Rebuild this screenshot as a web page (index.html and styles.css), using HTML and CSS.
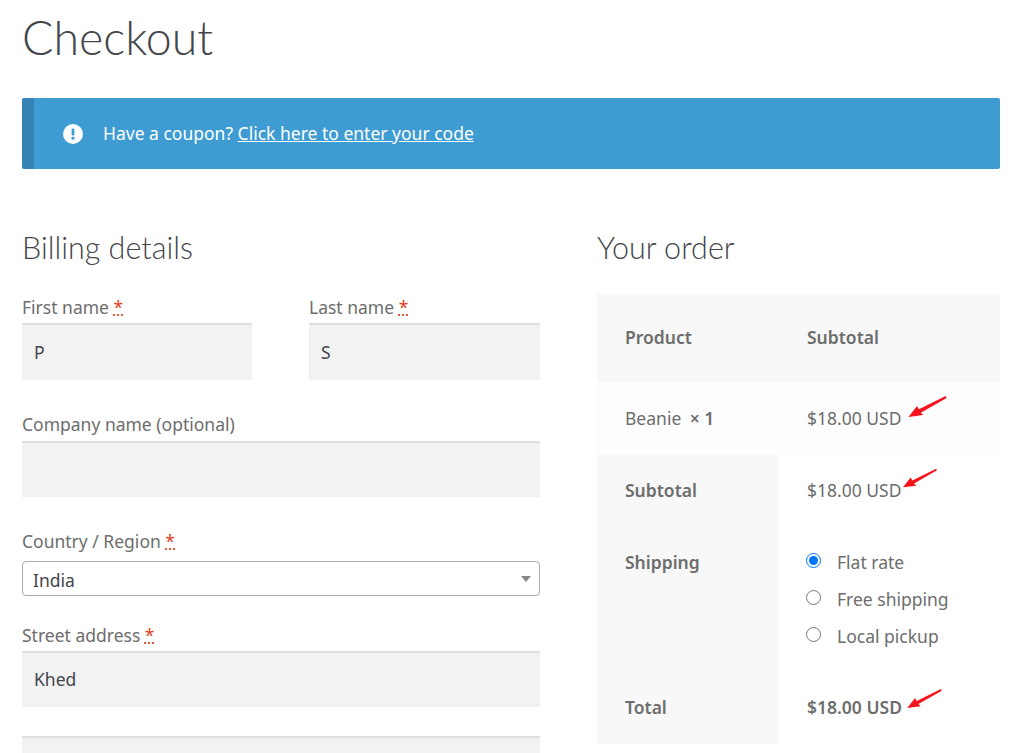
FILE: index.html
```html
<!DOCTYPE html>
<html lang="en">
<head>
    <meta charset="UTF-8">
    <meta name="viewport" content="width=device-width, initial-scale=1.0">
    <title>Checkout</title>
    <link rel="stylesheet" href="styles.css">
</head>
<body>
    <svg class="sprite" aria-hidden="true">
        <symbol id="arrow" viewBox="0 0 40 22">
            <polygon points="0,22 9,10.5 11,14 39,0 40,2 13,17.5 15.5,20"></polygon>
        </symbol>
    </svg>

    <div class="page">
        <h1>Checkout</h1>

        <div class="notice">
            <svg class="notice-icon" viewBox="0 0 20 20">
                <circle cx="10" cy="10" r="10" fill="#fff"></circle>
                <rect x="8.6" y="4.4" width="2.8" height="7.2" rx="1.2" fill="#3e9cd3"></rect>
                <circle cx="10" cy="14.2" r="1.6" fill="#3e9cd3"></circle>
            </svg>
            <span class="notice-text">Have a coupon? <a href="#">Click here to enter your code</a></span>
        </div>

        <div class="checkout">
            <!-- Billing -->
            <div class="billing">
                <h3>Billing details</h3>
                <div class="name-row">
                    <div class="field">
                        <label>First name <abbr class="required" title="required">*</abbr></label>
                        <input type="text" value="P">
                    </div>
                    <div class="field">
                        <label>Last name <abbr class="required" title="required">*</abbr></label>
                        <input type="text" value="S">
                    </div>
                </div>
                <div class="field field-company">
                    <label>Company name (optional)</label>
                    <input type="text">
                </div>
                <div class="field field-country">
                    <label>Country / Region <abbr class="required" title="required">*</abbr></label>
                    <div class="select-wrap">
                        <select>
                            <option>India</option>
                        </select>
                    </div>
                </div>
                <div class="field field-street">
                    <label>Street address <abbr class="required" title="required">*</abbr></label>
                    <input type="text" value="Khed">
                </div>
                <input class="address-2" type="text">
            </div>

            <!-- Order -->
            <div class="order">
                <h3>Your order</h3>
                <table>
                    <thead>
                        <tr>
                            <th>Product</th>
                            <th>Subtotal</th>
                        </tr>
                    </thead>
                    <tbody>
                        <tr class="item-row">
                            <td>Beanie <strong class="qty">× 1</strong></td>
                            <td>$18.00 USD
                                <svg class="arrow arrow-item"><use href="#arrow"></use></svg>
                            </td>
                        </tr>
                    </tbody>
                    <tfoot>
                        <tr class="subtotal-row">
                            <th>Subtotal</th>
                            <td>$18.00 USD
                                <svg class="arrow arrow-subtotal"><use href="#arrow"></use></svg>
                            </td>
                        </tr>
                        <tr class="shipping-row">
                            <th>Shipping</th>
                            <td>
                                <label class="radio"><input type="radio" name="ship" checked> Flat rate</label>
                                <label class="radio"><input type="radio" name="ship"> Free shipping</label>
                                <label class="radio"><input type="radio" name="ship"> Local pickup</label>
                            </td>
                        </tr>
                        <tr class="total-row">
                            <th>Total</th>
                            <td><strong>$18.00 USD</strong>
                                <svg class="arrow arrow-total"><use href="#arrow"></use></svg>
                            </td>
                        </tr>
                    </tfoot>
                </table>
            </div>
        </div>
    </div>
</body>
</html>
```

FILE: styles.css
```css
html, body { height: 100%; overflow: hidden; }
body { margin: 0; background: #fff; color: #6d6d6d; font-family: "Noto Sans", "Open Sans", sans-serif; font-size: 17.5px; }
.sprite { display: none; }
.page { padding: 0 24px 0 22px; }

h1 { margin: 0; height: 98px; padding-top: 7px; box-sizing: border-box; font-family: "Lato", sans-serif; font-size: 46.5px; line-height: 60px; font-weight: 300; color: #43454b; }
h3 { margin: 0; height: 66px; font-family: "Lato", sans-serif; font-size: 30.5px; line-height: 38px; font-weight: 300; color: #43454b; }

.notice { display: flex; align-items: center; height: 71px; box-sizing: border-box; padding-left: 29px; background: #3e9cd3; border-left: 12px solid #3582b5; border-radius: 2px; color: #fff; }
.notice a { color: #fff; }
.notice-icon { width: 20px; height: 20px; margin-right: 20px; }
.notice-text { padding-bottom: 2px; }

.checkout { display: grid; grid-template-columns: 518px 403px; column-gap: 57px; padding-top: 59px; }

.name-row { display: grid; grid-template-columns: 230px 231px; column-gap: 57px; }
.name-row input[type="text"] { height: 57px; }
.field label { display: block; height: 29px; line-height: 27px; }
.required { color: #e2401c; text-decoration: underline dotted; }
input[type="text"] { display: block; width: 100%; height: 56px; box-sizing: border-box; padding: 0 12px; border: 0; background: #f2f2f2; box-shadow: inset 0 2px 1px rgba(0, 0, 0, 0.08); color: #43454b; font-family: inherit; font-size: 17.5px; }
input.address-2[type="text"] { height: 17px; margin-top: 29px; }
.field-company { margin-top: 30px; }
.field-company label { height: 31px; line-height: 29px; }
.field-country { margin-top: 30px; }
.field-country label { height: 34px; line-height: 29px; }
.select-wrap { position: relative; }
.select-wrap::after { content: ""; position: absolute; right: 9px; top: 15px; border-style: solid; border-width: 6px 5px 0; border-color: #888 transparent transparent; }
select { display: block; width: 100%; height: 35px; box-sizing: border-box; padding: 2px 10px 0; border: 1px solid #aaa; border-radius: 4px; background: #fff; color: #43454b; font-family: inherit; font-size: 17.5px; appearance: none; }
.field-street { margin-top: 26px; }

table { width: 100%; border-collapse: collapse; table-layout: fixed; }
th, td { padding: 0 0 2px 28px; text-align: left; }
th { font-weight: 600; background: #f8f8f8; }
th:first-child { width: 153px; }
td { position: relative; }
td:last-child, thead th:last-child { padding-left: 29px; }
thead tr { height: 88px; }
.item-row { height: 73px; background: #fdfdfd; }
.qty { margin-left: 4px; font-weight: 600; }
.subtotal-row { height: 72px; }
.shipping-row { height: 145px; }
.shipping-row th { vertical-align: top; padding-top: 23px; }
.shipping-row td { vertical-align: top; padding-top: 16px; }
.total-row { height: 72px; }
.total-row strong { font-weight: 600; }

.radio { display: flex; align-items: center; height: 37px; }
.radio input { width: 15px; height: 15px; margin: 0 16px 3px -1px; accent-color: #0075ff; }

.arrow { position: absolute; fill: #f5141c; }
.arrow-item { left: 130px; top: 14px; width: 39px; height: 21px; }
.arrow-subtotal { left: 125px; top: 13px; width: 34px; height: 20px; }
.arrow-total { left: 129px; top: 17px; width: 35px; height: 19px; }
```
